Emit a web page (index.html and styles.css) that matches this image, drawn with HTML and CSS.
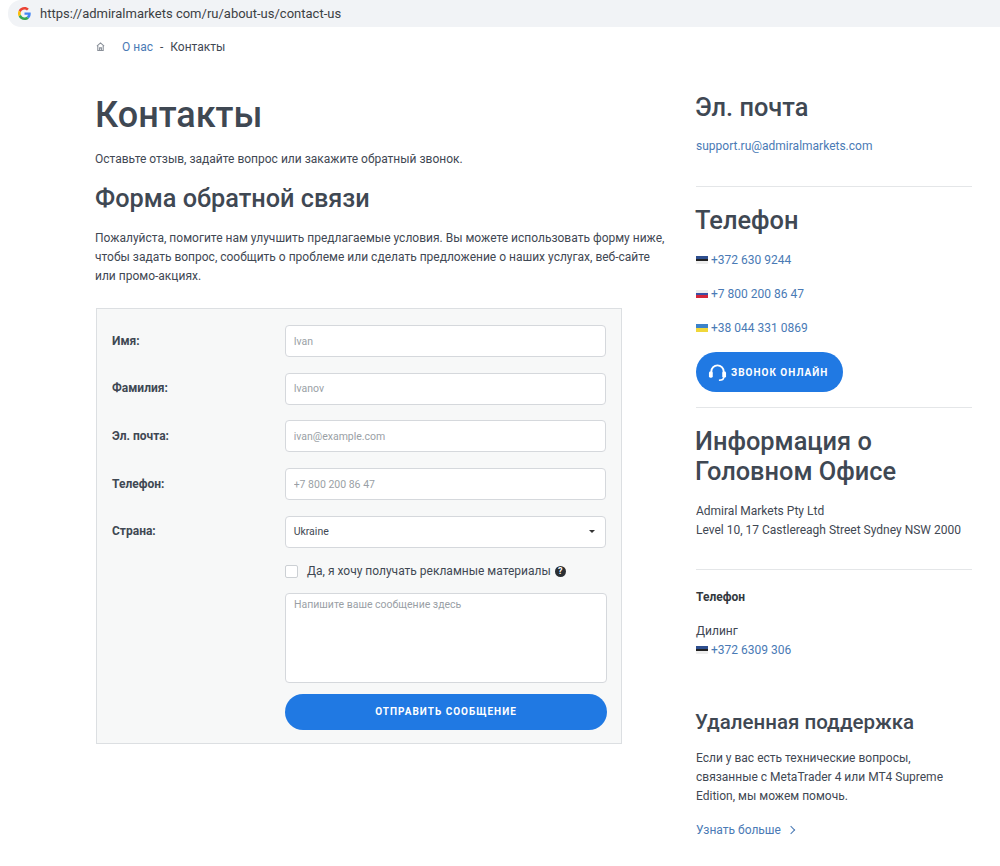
FILE: index.html
```html
<!DOCTYPE html>
<html lang="ru">
<head>
    <meta charset="UTF-8">
    <meta name="viewport" content="width=device-width, initial-scale=1.0">
    <title>Контакты</title>
    <link rel="stylesheet" href="styles.css">
</head>
<body>

    <div class="urlbar">
        <svg class="g-logo" viewBox="0 0 48 48" width="13" height="13">
            <path fill="#ea4335" d="M24 9.5c3.5 0 6.700 1.300 9.100 3.500l6.800-6.800C35.800 2.400 30.300 0 24 0 14.600 0 6.500 5.400 2.600 13.200l7.900 6.200C12.400 13.700 17.700 9.500 24 9.500z"/>
            <path fill="#4285f4" d="M46.900 24.500c0-1.600-.1-3.100-.4-4.500H24v9h12.900c-.6 3-2.200 5.500-4.700 7.200l7.600 5.900c4.400-4.100 7.100-10.100 7.100-17.600z"/>
            <path fill="#fbbc05" d="M10.500 28.600c-.5-1.400-.8-3-.8-4.600s.3-3.200.8-4.600l-7.900-6.200C.9 16.500 0 20.100 0 24s.9 7.500 2.600 10.800l7.900-6.200z"/>
            <path fill="#34a853" d="M24 48c6.500 0 11.900-2.100 15.900-5.900l-7.600-5.900c-2.200 1.400-4.900 2.300-8.200 2.300-6.300 0-11.600-4.200-13.500-9.900l-7.900 6.200C6.500 42.600 14.600 48 24 48z"/>
        </svg>
        <span>https://admiralmarkets com/ru/about-us/contact-us</span>
    </div>

    <nav class="crumbs">
        <svg class="home" viewBox="0 0 10 10" width="9" height="9">
            <path d="M1 4.500 5 1l4 3.500M2 4v5.500h6V4M4 9.500V6.500h2v3" fill="none" stroke="#8a9099" stroke-width="1.200"/>
        </svg>
        <a href="#">О нас</a>
        <span class="sep">-</span>
        <span>Контакты</span>
    </nav>

    <div class="page">
        <main class="content">
            <h1>Контакты</h1>
            <p class="lead">Оставьте отзыв, задайте вопрос или закажите обратный звонок.</p>
            <h2>Форма обратной связи</h2>
            <p class="intro">Пожалуйста, помогите нам улучшить предлагаемые условия. Вы можете использовать форму ниже, чтобы задать вопрос, сообщить о проблеме или сделать предложение о наших услугах, веб-сайте или промо-акциях.</p>

            <form class="contact-form">
                <div class="row">
                    <label for="firstName">Имя:</label>
                    <input type="text" id="firstName" placeholder="Ivan">
                </div>
                <div class="row">
                    <label for="lastName">Фамилия:</label>
                    <input type="text" id="lastName" placeholder="Ivanov">
                </div>
                <div class="row">
                    <label for="email">Эл. почта:</label>
                    <input type="text" id="email" placeholder="ivan@example.com">
                </div>
                <div class="row">
                    <label for="phone">Телефон:</label>
                    <input type="text" id="phone" placeholder="+7 800 200 86 47">
                </div>
                <div class="row">
                    <label for="country">Страна:</label>
                    <div class="select" id="country">Ukraine<span class="caret"></span></div>
                </div>
                <div class="fields">
                    <div class="check">
                        <span class="box"></span>
                        <span>Да, я хочу получать рекламные материалы</span>
                        <span class="help">?</span>
                    </div>
                    <textarea placeholder="Напишите ваше сообщение здесь"></textarea>
                    <button type="button" class="send">Отправить сообщение</button>
                </div>
            </form>
        </main>

        <aside class="side">
            <section class="block mail">
                <h3>Эл. почта</h3>
                <a href="#">support.ru@admiralmarkets.com</a>
            </section>

            <section class="block phones">
                <h3>Телефон</h3>
                <p><span class="flag ee"></span><a href="#">+372 630 9244</a></p>
                <p><span class="flag ru"></span><a href="#">+7 800 200 86 47</a></p>
                <p><span class="flag ua"></span><a href="#">+38 044 331 0869</a></p>
                <button type="button" class="call">
                    <svg viewBox="0 0 20 20" width="19" height="19">
                        <path d="M3.500 11V9a6.500 6.500 0 0 1 13 0v2" fill="none" stroke="#fff" stroke-width="2"/>
                        <rect x="1" y="9" width="4" height="6.500" rx="1.500" fill="#fff"/>
                        <rect x="15" y="9" width="4" height="6.500" rx="1.500" fill="#fff"/>
                        <path d="M16.500 15c0 2-2 3.200-5 3.200" fill="none" stroke="#fff" stroke-width="1.700"/>
                    </svg>
                    Звонок онлайн
                </button>
            </section>

            <section class="block office">
                <h3>Информация о Головном Офисе</h3>
                <p>Admiral Markets Pty Ltd<br>Level 10, 17 Castlereagh Street Sydney NSW 2000</p>
            </section>

            <section class="dealing">
                <h5>Телефон</h5>
                <p>Дилинг<br><span class="flag ee"></span><a href="#">+372 6309 306</a></p>
            </section>

            <section class="support">
                <h4>Удаленная поддержка</h4>
                <p>Если у вас есть технические вопросы, связанные с MetaTrader 4 или MT4 Supreme Edition, мы можем помочь.</p>
                <a href="#" class="more">Узнать больше <span class="chev"></span></a>
            </section>
        </aside>
    </div>

</body>
</html>
```

FILE: styles.css
```css
* {
    box-sizing: border-box;
}
body {
    font-family: Roboto, Arial, sans-serif;
    font-size: 12px;
    line-height: 19px;
    color: #3f4853;
    margin: 0;
    padding: 0;
    background-color: white;
}
a {
    color: #4a7ab5;
    text-decoration: none;
}
.urlbar {
    display: flex;
    align-items: center;
    height: 27px;
    margin-left: 8px;
    padding-left: 10px;
    background-color: #f1f3f6;
    border-radius: 13px 0 0 13px;
    font-size: 13px;
    color: #3c4043;
}
.urlbar span {
    margin-left: 9px;
}
.g-logo {
    display: block;
}
.crumbs {
    display: flex;
    align-items: center;
    height: 20px;
    margin-top: 10px;
    padding-left: 96px;
}
.home {
    margin-right: 17px;
    margin-bottom: 2px;
}
.sep {
    margin: 0 7px;
}
.page {
    display: flex;
    padding-left: 95px;
}
.content {
    width: 601px;
}
h1 {
    font-size: 36px;
    line-height: 44px;
    font-weight: 500;
    margin: 36px 0 0;
}
.lead {
    margin: 13px 0 0;
}
h2 {
    font-size: 25.300px;
    line-height: 30px;
    font-weight: 500;
    margin: 15px 0 0;
}
.intro {
    width: 575px;
    margin: 15px 0 0;
}
.contact-form {
    width: 526px;
    height: 436px;
    margin: 22px 0 0 1px;
    padding: 16px 15px 15px;
    background-color: #f7f8f8;
    border: 1px solid #dcdfe2;
}
.row {
    display: flex;
    align-items: center;
    height: 32px;
    margin-bottom: 15.700px;
}
.row label {
    width: 173px;
    font-weight: 700;
}
input[type="text"], textarea, .select {
    width: 322px;
    height: 32px;
    padding: 0 8px;
    background-color: white;
    border: 1px solid #d5d8dc;
    border-radius: 4px;
    font-family: Roboto, Arial, sans-serif;
    font-size: 10.500px;
}
input::placeholder, textarea::placeholder {
    color: #9a9fa6;
}
.select {
    display: flex;
    align-items: center;
    justify-content: space-between;
    color: #3f4853;
}
.caret {
    border-top: 3px solid #333;
    border-left: 3px solid transparent;
    border-right: 3px solid transparent;
    margin-right: 2px;
}
.fields {
    margin-left: 173px;
    padding-top: 1.500px;
}
.check {
    display: flex;
    align-items: center;
    height: 13px;
}
.box {
    width: 13px;
    height: 13px;
    margin-right: 9px;
    background-color: white;
    border: 1px solid #ccd0d4;
    border-radius: 2px;
}
.help {
    width: 11px;
    height: 11px;
    margin-left: 4px;
    border-radius: 50%;
    background-color: #2b2f33;
    color: white;
    font-size: 9px;
    font-weight: 700;
    line-height: 11px;
    text-align: center;
}
textarea {
    display: block;
    height: 90px;
    margin-top: 15px;
    padding: 4px 8px;
    resize: none;
}
.send {
    display: block;
    width: 322px;
    height: 36px;
    margin-top: 11px;
    background-color: #2079e3;
    color: white;
    border: none;
    border-radius: 18px;
    font-family: Roboto, Arial, sans-serif;
    font-size: 10px;
    font-weight: 700;
    letter-spacing: 1px;
    text-transform: uppercase;
}
.side {
    width: 276px;
}
.block {
    border-bottom: 1px solid #e4e6e8;
}
h3 {
    font-size: 25.400px;
    line-height: 30px;
    font-weight: 500;
    margin: 0 0 0 -1px;
}
.mail {
    height: 95px;
    margin-top: 35px;
}
.mail h3 {
    margin-bottom: 15px;
}
.phones {
    height: 221px;
    padding-top: 18px;
}
.phones p {
    margin: 0 0 15px;
}
.phones h3 {
    margin-bottom: 16px;
}
.flag {
    display: inline-block;
    width: 12px;
    height: 8px;
    margin-right: 3px;
}
.flag.ee {
    background: linear-gradient(#2e4f8f 33%, #222 33%, #222 66%, #eee 66%);
}
.flag.ru {
    background: linear-gradient(#eee 33%, #3a4fa5 33%, #3a4fa5 66%, #d4263a 66%);
}
.flag.ua {
    background: linear-gradient(#3b82c9 50%, #f0d73a 50%);
}
.call {
    display: flex;
    align-items: center;
    width: 147px;
    height: 40px;
    margin-top: -1px;
    padding-left: 12px;
    background-color: #2079e3;
    color: white;
    border: none;
    border-radius: 20px;
    font-family: Roboto, Arial, sans-serif;
    font-size: 10px;
    font-weight: 700;
    letter-spacing: 1px;
    text-transform: uppercase;
}
.call svg {
    margin-right: 4px;
}
.office {
    height: 162px;
    padding-top: 18px;
}
.office p {
    margin: 16px 0 0;
}
.dealing h5 {
    font-size: 12px;
    line-height: 19px;
    font-weight: 700;
    margin: 18px 0 0;
    color: #33383e;
}
.dealing p {
    margin: 15px 0 0;
}
.support h4 {
    font-size: 20.500px;
    line-height: 26px;
    font-weight: 500;
    margin: 49px 0 0 -1px;
}
.support p {
    margin: 14px 0 0;
}
.more {
    display: block;
    margin-top: 15px;
}
.chev {
    display: inline-block;
    width: 6px;
    height: 6px;
    margin-left: 4px;
    border-top: 1px solid #4a7ab5;
    border-right: 1px solid #4a7ab5;
    transform: rotate(45deg);
    vertical-align: 1px;
}
```
